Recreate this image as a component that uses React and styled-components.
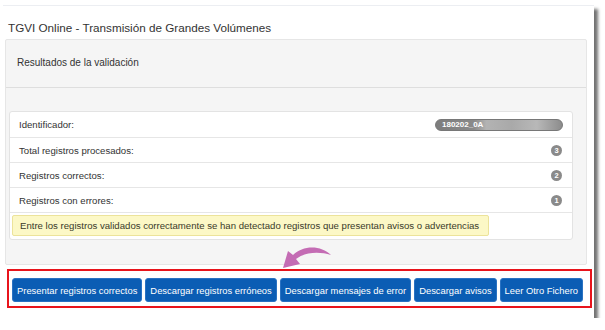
import React from 'react';
import styled, { createGlobalStyle } from 'styled-components';

const textcolor = '#333';

const Global = createGlobalStyle`
  body {
    margin: 0;
    background: #fff;
    font-family: "Liberation Sans", Arial, sans-serif;
    color: ${textcolor};
  }
`;

const Frame = styled.div`
  position: relative;
  margin: 5px 0 0 3px;
  width: 591px;
  height: 313px;
  box-sizing: border-box;
  background: #fff;
  border-top: 1px solid #eceef2;
  box-shadow: 4px 4px 3px rgba(0, 0, 0, 0.55);
  display: flex;
  flex-direction: column;
`;

const Title = styled.div`
  height: 33px;
  display: flex;
  align-items: flex-end;
  padding: 0 0 5px 5px;
  box-sizing: border-box;
  font-size: 11.7px;
`;

const Panel = styled.div`
  margin: 0 7px 0 2px;
  background: #f5f5f5;
  border: 1px solid #e6e6e6;
  border-radius: 2px;
`;

const PanelHeader = styled.div`
  height: 48px;
  box-sizing: border-box;
  padding: 0 0 2px 11px;
  display: flex;
  align-items: center;
  font-size: 10px;
  border-bottom: 1px solid #dedede;
`;

const PanelBody = styled.div`
  padding: 23px 13px 24px 3px;
`;

const List = styled.div`
  background: #fff;
  border: 1px solid #e3e3e3;
  border-radius: 3px;
`;

const Row = styled.div`
  height: 25px;
  box-sizing: border-box;
  padding: 0 9px 0 9px;
  display: flex;
  align-items: center;
  justify-content: space-between;
  font-size: 9.6px;
  border-top: ${p => (p.first ? 'none' : '1px solid #e6e6e6')};
`;

const Pill = styled.span`
  display: inline-flex;
  align-items: center;
  width: 128px;
  height: 12px;
  border-radius: 6px;
  background: linear-gradient(90deg, #7d7d7d 0%, #8a8a8a 30%, #b3b3b3 40%, #a9a9a9 60%, #b8b8b8 80%, #8c8c8c 100%);
  border: 1px solid #777;
  color: #fff;
  font-size: 8px;
  font-weight: bold;
  padding-left: 6px;
  box-sizing: border-box;
`;

const Badge = styled.span`
  width: 11px;
  height: 11px;
  border-radius: 50%;
  background: #8a8a8a;
  color: #fff;
  font-size: 7.5px;
  font-weight: bold;
  display: flex;
  align-items: center;
  justify-content: center;
  margin-right: 1px;
`;

const AlertRow = styled.div`
  border-top: 1px solid #e6e6e6;
  padding: 2px 2px 3px 2px;
`;

const Alert = styled.div`
  display: inline-block;
  background: #fcf8c6;
  border: 1px solid #ece39a;
  border-radius: 2px;
  padding: 4px 9px 4px 7px;
  font-size: 9.6px;
  color: #3a3a2a;
`;

const Actions = styled.div`
  margin: 4px 2px 0 4px;
  border: 2px solid #e8141c;
  padding: 7px 4px 4px 3px;
  display: flex;
  gap: 3px;
`;

const Button = styled.button`
  height: 24px;
  padding: 0 4px;
  background: #0b5db4;
  border: 1px solid #2a72c2;
  border-radius: 3px;
  color: #fff;
  font-family: "Liberation Sans", Arial, sans-serif;
  font-size: 9.4px;
  white-space: nowrap;
  cursor: pointer;
`;

const Arrow = styled.svg`
  position: absolute;
  left: 274px;
  top: 236px;
`;

const rows = [
  { label: 'Total registros procesados:', n: 3 },
  { label: 'Registros correctos:', n: 2 },
  { label: 'Registros con errores:', n: 1 },
];

const buttons = [
  'Presentar registros correctos',
  'Descargar registros erróneos',
  'Descargar mensajes de error',
  'Descargar avisos',
  'Leer Otro Fichero',
];

export default function App() {
  return (
    <>
      <Global />
      <Frame>
        <Title>TGVI Online - Transmisión de Grandes Volúmenes</Title>
        <Panel>
          <PanelHeader>Resultados de la validación</PanelHeader>
          <PanelBody>
            <List>
              <Row first>
                <span>Identificador:</span>
                <Pill>180202_0A</Pill>
              </Row>
              {rows.map(r => (
                <Row key={r.label}>
                  <span>{r.label}</span>
                  <Badge>{r.n}</Badge>
                </Row>
              ))}
              <AlertRow>
                <Alert>
                  Entre los registros validados correctamente se han detectado registros que presentan avisos o advertencias
                </Alert>
              </AlertRow>
            </List>
          </PanelBody>
        </Panel>
        <Actions>
          {buttons.map(b => (
            <Button key={b}>{b}</Button>
          ))}
        </Actions>
        <Arrow width="60" height="30" viewBox="0 0 60 30">
          <path
            d="M54 13 C44 3 26 3 16 13 L11 9 L6 26 L23 22 L19 17 C28 10 42 9 54 13 Z"
            fill="#c46cb4"
          />
        </Arrow>
      </Frame>
    </>
  );
}
